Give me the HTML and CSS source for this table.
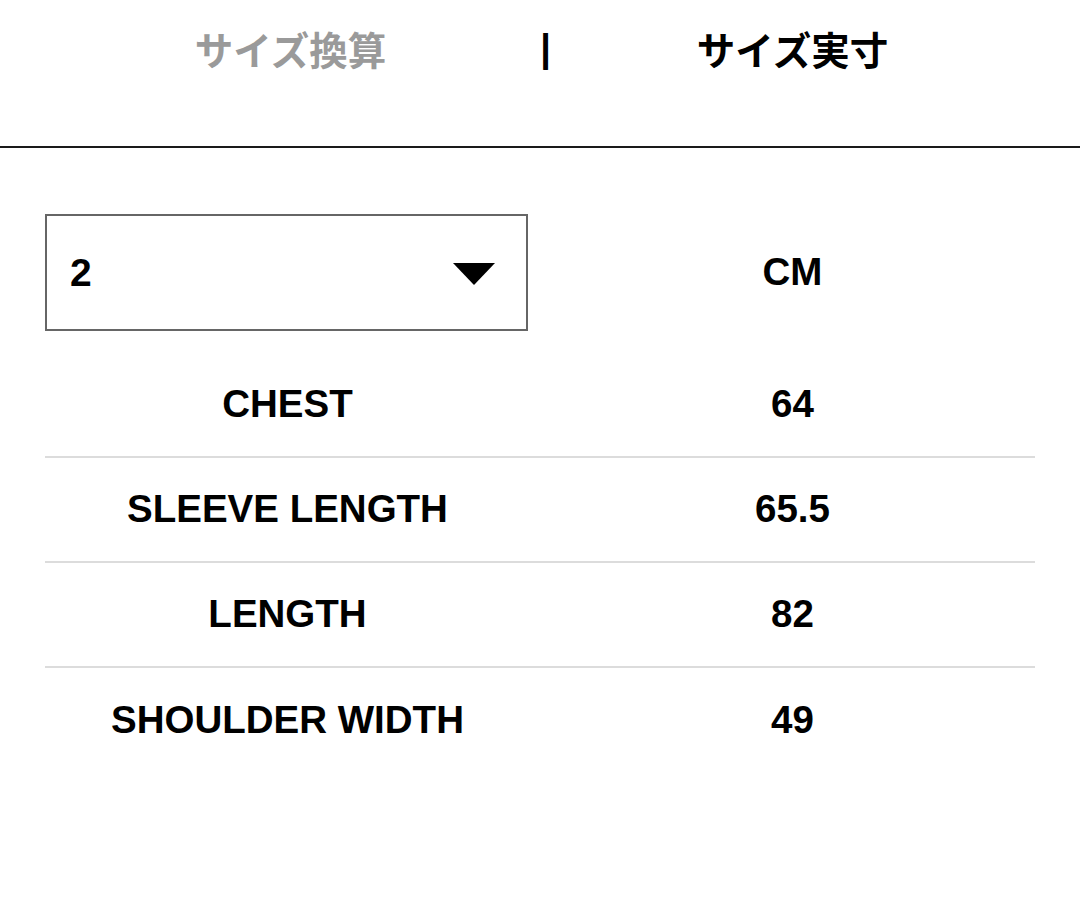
FILE: index.html
```html
<!DOCTYPE html>
<html lang="ja">
<head>
<meta charset="utf-8">
<title>サイズ</title>
<link rel="stylesheet" href="styles.css">
</head>
<body>
<div class="page">
  <header class="tabs">
    <div class="tab tab-inactive">サイズ換算</div>
    <div class="tab-sep">|</div>
    <div class="tab tab-active">サイズ実寸</div>
  </header>
  <main class="content">
    <div class="grid top-row">
      <div class="select">
        <span class="select-value">2</span>
        <svg class="select-arrow" width="42" height="22" viewBox="0 0 42 22"><polygon points="0,0 42,0 21,22" fill="#000"/></svg>
      </div>
      <div class="cell unit">CM</div>
    </div>
    <div class="rows">
      <div class="grid row"><div class="cell">CHEST</div><div class="cell">64</div></div>
      <div class="grid row"><div class="cell">SLEEVE LENGTH</div><div class="cell">65.5</div></div>
      <div class="grid row"><div class="cell">LENGTH</div><div class="cell">82</div></div>
      <div class="grid row last"><div class="cell">SHOULDER WIDTH</div><div class="cell">49</div></div>
    </div>
  </main>
</div>
</body>
</html>
```
FILE: styles.css
```css
html, body {
  margin: 0;
  padding: 0;
  background: #fff;
}
body {
  font-family: "Liberation Sans", Arial, "Noto Sans CJK JP", sans-serif;
  font-weight: bold;
  color: #000;
}
.page {
  width: 1080px;
}
.tabs {
  box-sizing: border-box;
  height: 148px;
  padding: 0 45px 50px;
  display: grid;
  grid-template-columns: 1fr 20px 1fr;
  align-items: center;
  border-bottom: 2px solid #1a1a1a;
}
.tab {
  font-family: "Noto Sans CJK JP", sans-serif;
  font-size: 38.5px;
  font-weight: bold;
  text-align: center;
  line-height: 1;
}
.tab-inactive {
  color: #9a9a9a;
  padding-left: 6px;
}
.tab-active {
  color: #000;
}
.tab-sep {
  font-size: 38px;
  line-height: 1;
  justify-self: end;
  margin-right: -1px;
  color: #000;
  font-weight: bold;
}
.content {
  padding: 66px 45px 0;
}
.grid {
  display: grid;
  grid-template-columns: 1fr 1fr;
  column-gap: 20px;
  align-items: center;
}
.cell {
  text-align: center;
  font-size: 38.5px;
  line-height: 1;
}
.top-row {
  height: 117px;
}
.select {
  box-sizing: border-box;
  width: 483px;
  height: 117px;
  border: 2px solid #666;
  display: flex;
  align-items: center;
  justify-content: space-between;
  padding: 0 31px 0 23px;
}
.select-value {
  font-size: 39px;
  line-height: 1;
}
.select-arrow {
  display: block;
  margin-top: 2px;
}
.rows {
  margin-top: 22px;
}
.row {
  box-sizing: border-box;
  height: 105px;
  border-bottom: 2px solid #dcdcdc;
}
.row.last {
  border-bottom: none;
}
```
